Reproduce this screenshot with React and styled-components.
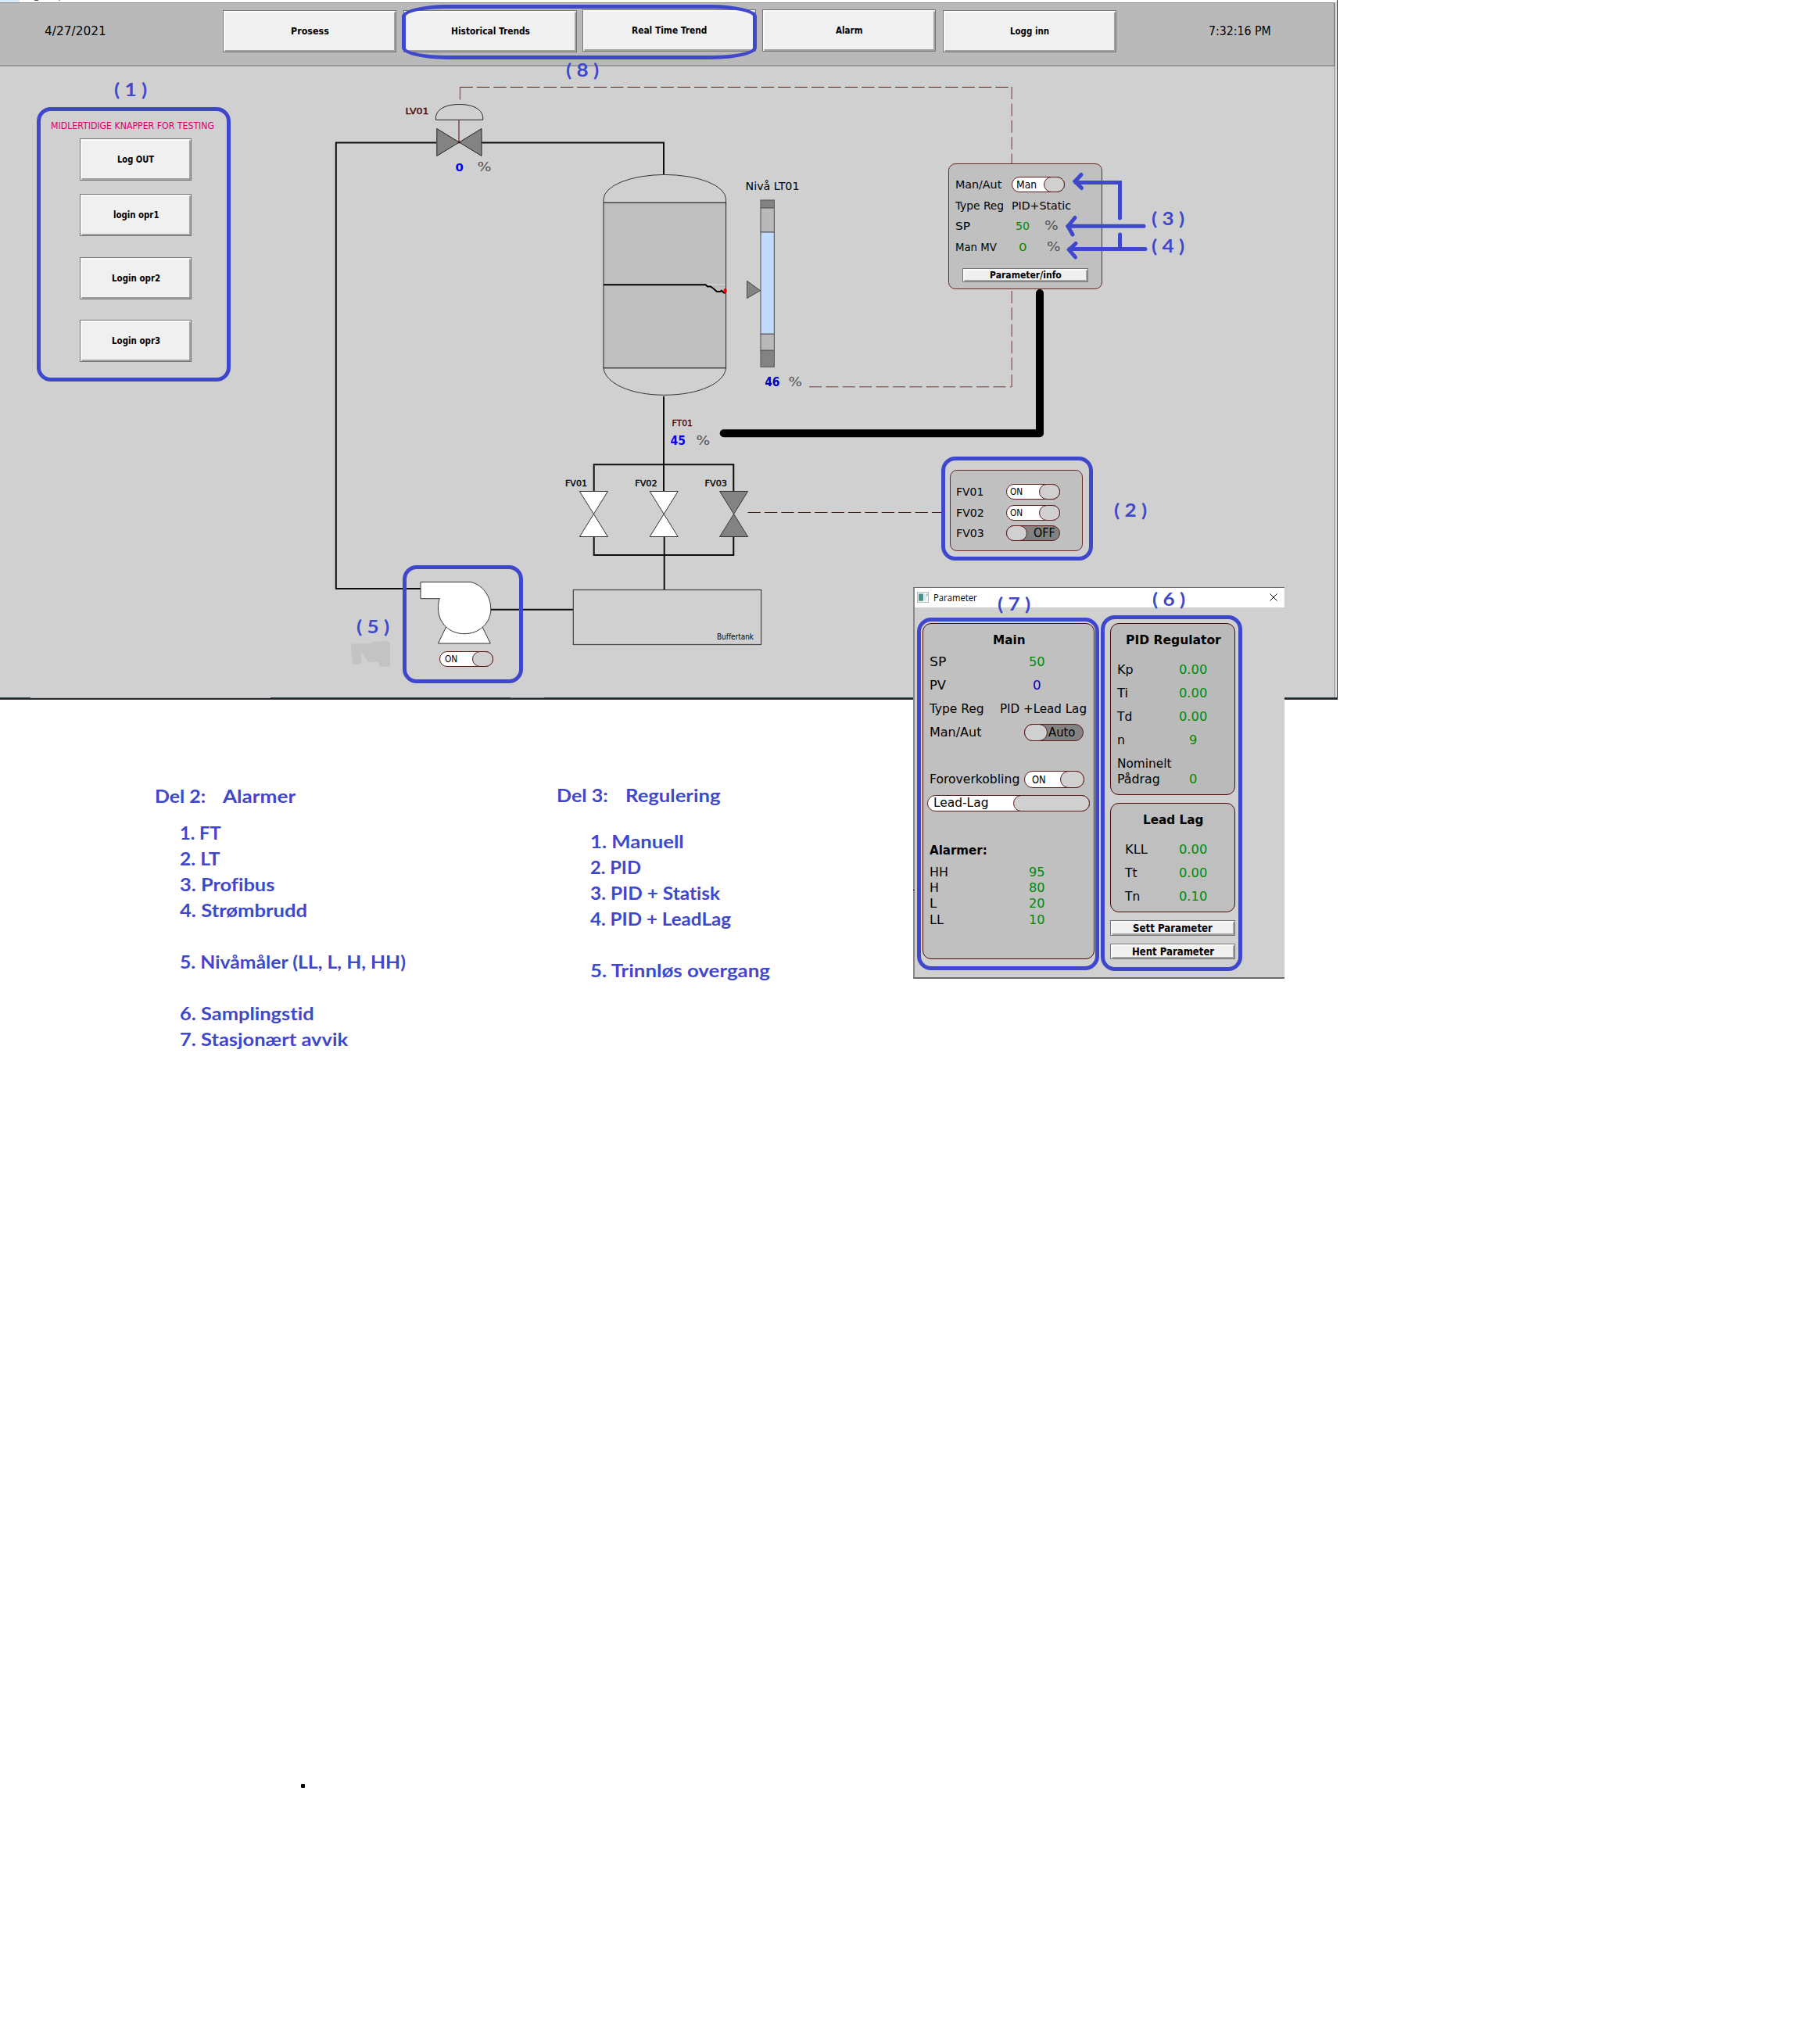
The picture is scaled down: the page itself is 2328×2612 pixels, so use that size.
import React, { useLayoutEffect, useRef, useState } from "react";
import styled, { createGlobalStyle } from "styled-components";

const INK = "#3f48cc";
const MAROON = "#4a0808";
const GREEN = "#008a00";
const UI_FONT = `"DejaVu Sans Condensed", "DejaVu Sans", sans-serif`;

const GlobalStyle = createGlobalStyle`
  * { box-sizing: border-box; }
  body { margin: 0; background: #fff; }
`;

const Page = styled.main`
  position: relative;
  width: 2328px;
  height: 2612px;
  overflow: hidden;
  background: #fff;
  font-family: ${UI_FONT};
  font-variant-ligatures: none;
  color: #000;
`;

/* ---------- text fitted to a fixed width ---------- */

const FitBox = styled.span`
  display: block;
  flex: none;
  width: ${(p) => p.$w}px;
  font-size: ${(p) => p.$size}px;
  font-weight: ${(p) => (p.$bold ? 700 : 400)};
  color: ${(p) => p.$color || "inherit"};
  white-space: pre;
`;

const FitText = styled.span`
  display: inline-block;
  margin-left: -0.5px;
  transform-origin: 0 50%;
`;

function Fit({ w, size = 15, bold, color, children }) {
  const ref = useRef(null);
  const [k, setK] = useState(1);
  useLayoutEffect(() => {
    setK((w + 1.5) / ref.current.offsetWidth);
  }, [w, children]);
  return (
    <FitBox $w={w} $size={size} $bold={bold} $color={color}>
      <FitText ref={ref} style={{ transform: `scaleX(${k})` }}>
        {children}
      </FitText>
    </FitBox>
  );
}

/* ---------- controls ---------- */

const Button = styled.button`
  display: flex;
  flex: none;
  align-items: center;
  justify-content: center;
  width: ${(p) => p.$w}px;
  height: ${(p) => p.$h}px;
  margin: ${(p) => p.$m || 0};
  padding: 0;
  border: 1px solid #757575;
  border-radius: 0;
  background: #f0f0f0;
  box-shadow: inset 1.5px 1.5px 0 #fff, inset -2px -2px 0 #a2a2a2;
  font-family: ${UI_FONT};
  color: #000;
`;

const Track = styled.span`
  display: flex;
  flex: none;
  flex-direction: ${(p) => (p.$on ? "row" : "row-reverse")};
  width: ${(p) => p.$w}px;
  height: ${(p) => p.$h}px;
  border: 1px solid #5c1a1a;
  border-radius: ${(p) => p.$h / 2}px;
  background: ${(p) => (p.$on ? "#fff" : "#828282")};
  color: #000;
`;

const TrackText = styled.span`
  display: flex;
  flex: 1;
  align-items: center;
  padding-left: ${(p) => p.$pad}px;
  line-height: 16px;
`;

const Knob = styled.span`
  flex: none;
  width: ${(p) => p.$w}px;
  margin: -1px;
  border: 1px solid #5c1a1a;
  border-radius: ${(p) => p.$h / 2}px;
  background: #d0d0d0;
`;

function Toggle({ on, w, h = 20, knob = 27, pad, text, textW, size = 13 }) {
  return (
    <Track $on={on} $w={w} $h={h}>
      <TrackText $pad={pad}>
        <Fit w={textW} size={size}>{text}</Fit>
      </TrackText>
      <Knob $w={knob} $h={h} />
    </Track>
  );
}

/* ---------- process screen ---------- */

const Screen = styled.section`
  position: relative;
  width: 1711px;
  height: 895px;
  border-right: 1px solid #222;
  border-bottom: 2px solid #23272b;
  background: #d0d0d0;
`;

const TopStrip = styled.div`
  display: flex;
  height: 3px;
  background: #fff;
`;

const StripTab = styled.span`
  width: 25px;
  background: #d9ecfb;
`;

const StripMark = styled.span`
  width: ${(p) => p.$w}px;
  height: 1px;
  margin-left: ${(p) => p.$gap}px;
  background: ${(p) => p.$color};
`;

const Header = styled.header`
  display: flex;
  align-items: flex-start;
  width: 1707px;
  height: 82px;
  padding: 8px 0 0 57px;
  border: solid #8a8a8a;
  border-width: 1px 1px 2px 0;
  border-bottom-color: #989898;
  background: #b9b9b9;
`;

const HeaderText = styled.div`
  width: ${(p) => p.$w}px;
  line-height: 56px;
`;

const Nav = styled.nav`
  display: flex;
  width: 1261px;
`;

const EdgeLine = styled.div`
  position: absolute;
  top: 4px;
  right: 0;
  width: 3px;
  height: 889px;
  border-left: 1px solid #808080;
  background: #e6e6e6;
`;

const FootLine = styled.div`
  position: absolute;
  left: 0;
  bottom: 0;
  display: flex;
  width: 1710px;
  height: 1px;
  background: #3a4c52;
`;

const FootGap = styled.span`
  width: ${(p) => p.$w}px;
  margin-left: ${(p) => p.$gap}px;
  background: ${(p) => p.$color};
`;

const Diagram = styled.svg`
  position: absolute;
  left: 0;
  top: 0;
  pointer-events: none;
`;

const DiagramText = styled.text`
  font-family: ${UI_FONT};
  font-size: ${(p) => p.$size}px;
  font-weight: ${(p) => (p.$bold ? 700 : 400)};
  stroke: currentColor;
  stroke-width: ${(p) => (p.$heavy ? 0.35 : 0)};
`;

function T({ x, y, w, size = 14, bold, heavy, fill = "#000", children }) {
  return (
    <DiagramText
      x={x - 0.5}
      y={y + size * 0.365}
      textLength={w + 1}
      lengthAdjust="spacingAndGlyphs"
      fill={fill}
      color={fill}
      $size={size}
      $bold={bold}
      $heavy={heavy}
    >
      {children}
    </DiagramText>
  );
}

const Node = styled.div`
  position: absolute;
  left: ${(p) => p.$x}px;
  top: ${(p) => p.$y}px;
`;

const TestButtons = styled(Node)`
  display: flex;
  flex-direction: column;
  align-items: center;
  width: 217px;
`;

const TestTitle = styled.div`
  height: 22px;
  margin-right: 9px;
  line-height: 13px;
`;

const Panel = styled.div`
  width: ${(p) => p.$w}px;
  height: ${(p) => p.$h}px;
  padding: ${(p) => p.$pad};
  border: 1px solid ${(p) => p.$line || "#6b2a2a"};
  border-radius: ${(p) => p.$r || 9}px;
  background: ${(p) => p.$bg || "#c0c0c0"};
`;

const Row = styled.div`
  display: flex;
  align-items: center;
  height: ${(p) => p.$h}px;
  line-height: 20px;
  padding-left: ${(p) => p.$indent || 0}px;
`;

const WideRow = styled(Row)`
  margin-left: -3.5px;
`;

const Label = styled.span`
  flex: none;
  width: ${(p) => p.$w}px;
`;

const Value = styled.span`
  display: flex;
  flex: none;
  justify-content: center;
  width: ${(p) => p.$w}px;
  margin-right: ${(p) => p.$gap || 0}px;
`;

const Title = styled.div`
  display: flex;
  justify-content: center;
  height: ${(p) => p.$h}px;
  padding-right: 8px;
  line-height: ${(p) => p.$lh}px;
`;

/* ---------- parameter window ---------- */

const Window = styled.section`
  position: absolute;
  left: 1168px;
  top: 751px;
  width: 475px;
  height: 501px;
  border: solid #6a6a6a;
  border-width: 1px 0 2px 2px;
  border-left-color: #888;
  background: #d0d0d0;
`;

const EdgeTick = styled.span`
  position: absolute;
  left: -2px;
  top: 386px;
  width: 2px;
  height: 1px;
  background: ${MAROON};
`;

const TitleBar = styled.div`
  display: flex;
  align-items: center;
  height: 25px;
  padding: 0 9px 1px 3px;
  background: #fff;
  font-family: "Open Sans", "Noto Sans", sans-serif;
  line-height: 19px;
`;

const TitleText = styled.div`
  flex: 1;
  padding-left: 6px;
`;

const WindowBody = styled.div`
  display: flex;
  gap: 20px;
  padding: 20px 0 0 10px;
`;

const SideColumn = styled.div`
  display: flex;
  flex-direction: column;
  gap: 10px;
`;

const Spacer = styled.div`
  height: ${(p) => p.$h}px;
`;

/* ---------- pen annotations ---------- */

const PenBox = styled.div`
  position: absolute;
  left: ${(p) => p.$x}px;
  top: ${(p) => p.$y}px;
  width: ${(p) => p.$w}px;
  height: ${(p) => p.$h}px;
  border: 5px solid ${INK};
  border-radius: ${(p) => p.$r || "18px"};
`;

const PenLabel = styled.div`
  position: absolute;
  left: ${(p) => p.$x - 0.7}px;
  top: ${(p) => p.$y - 15}px;
  font-family: Lato, "Open Sans", sans-serif;
  line-height: 28px;
  color: ${INK};
`;

const Notes = styled.section`
  display: flex;
  align-items: flex-start;
  padding: 107px 0 0 198px;
  font-family: Lato, "Open Sans", sans-serif;
  line-height: 33px;
  color: ${INK};
`;

const NoteBlock = styled.div`
  width: ${(p) => p.$w}px;
  margin-top: ${(p) => p.$top || 0}px;
`;

const NoteHead = styled.div`
  display: flex;
  gap: 24px;
  height: 33px;
`;

const NoteList = styled.ul`
  margin: ${(p) => p.$top}px 0 0 ${(p) => p.$left}px;
  padding: 0;
  list-style: none;
`;

const NoteItem = styled.li`
  height: 33px;
  margin-top: ${(p) => (p.$gap ? 33 : 0)}px;
`;

const InkDot = styled.div`
  position: absolute;
  left: 385px;
  top: 2282px;
  width: 5px;
  height: 5px;
  border-radius: 1px;
  background: #000;
`;

const navItems = [
  ["Prosess", 47, "1px 9px 0 0"],
  ["Historical Trends", 99, "1px 7px 0 0"],
  ["Real Time Trend", 95, "0 8px 0 0"],
  ["Alarm", 33, "0 9px 0 0"],
  ["Logg inn", 49, "1px 0 0 0"],
];

const testItems = [
  ["Log OUT", 45.5, "0"],
  ["login opr1", 57, "17px 0 0"],
  ["Login opr2", 60.5, "27px 0 0"],
  ["Login opr3", 60.5, "26px 0 0"],
];

const penLabels = [
  ["1", 147, 115],
  ["8", 725, 90],
  ["3", 1474, 280],
  ["4", 1474, 315],
  ["2", 1426, 653],
  ["5", 457, 802],
  ["7", 1277, 773],
  ["6", 1475, 767],
];

const alarmNotes = [
  ["1. FT", 51],
  ["2. LT", 50],
  ["3. Profibus", 120],
  ["4. Strømbrudd", 161],
  ["5. Nivåmåler (LL, L, H, HH)", 288, true],
  ["6. Samplingstid", 170, true],
  ["7. Stasjonært avvik", 213.5],
];

const controlNotes = [
  ["1. Manuell", 118],
  ["2. PID", 63.5],
  ["3. PID + Statisk", 164],
  ["4. PID + LeadLag", 178],
  ["5. Trinnløs overgang", 228, true],
];

const alarmLimits = [
  ["HH", 22.3, "95"],
  ["H", 11, "80"],
  ["L", 8, "20"],
  ["LL", 17, "10"],
];

const Valve = ({ x, fill }) => (
  <path
    d={`M${x - 18} 628.5H${x + 18}L${x - 18} 686.5H${x + 18}Z`}
    fill={fill}
    stroke="#333"
    strokeWidth="1"
  />
);

function ProcessDiagram() {
  return (
    <Diagram width="1711" height="895" viewBox="0 0 1711 895">
      <g fill="none" stroke="#0c0c0c" strokeWidth="2">
        <path d="M558 182.5H429.8V753H538" />
        <path d="M616 182.5H849V224" />
        <path d="M849 507V629" />
        <path d="M759.7 629V594.3H938.3V629" />
        <path d="M759.7 687V710H938.3V687" />
        <path d="M849.7 687V754" />
        <path d="M627.5 779.7H733" />
      </g>
      <g fill="none" stroke="#8f6a6a" strokeWidth="1.5">
        <path d="M588.5 127.5V111.5" />
        <path d="M1294.2 111V209" strokeDasharray="16 5.4" />
        <path d="M1294.2 372V495" strokeDasharray="16 5.4" />
        <path d="M1035 494.7H1294" strokeDasharray="16 5.4" />
        <path d="M587 154V182" strokeWidth="2" />
      </g>
      <path d="M588.5 111.5H1294" fill="none" stroke="#5a1818" strokeWidth="1.2" strokeDasharray="16.4 5" />
      <path d="M956.5 655.5H1204" fill="none" stroke="#4a1010" strokeDasharray="16.4 5" />

      <path d="M557.5 153.3V149.5C559 139 571 133.5 587.5 133.5S616 139 617.7 149.5V153.3Z" fill="#d0d0d0" stroke="#222" />
      <path d="M558.8 164.5L616 199.5V164.5L558.8 199.5Z" fill="#838383" stroke="#222" />
      <circle cx="587.2" cy="182" r="1.6" fill={MAROON} />

      <path d="M772 259.3V255A78.3 31.6 0 0 1 928.6 255V259.3Z" fill="#d0d0d0" stroke="#333" />
      <path d="M772 470.7C774 490 806 505.3 850 505.3S927 490 928.5 470.7Z" fill="#d0d0d0" stroke="#333" />
      <rect x="772" y="259.3" width="156.6" height="211.4" fill="#bfbfbf" stroke="#222" />
      <path d="M904 363.5H928" stroke="#dadada" />
      <path d="M772 364.3H902.5L905 366.5H909L913 369.5L917 373H921L923 371.8L926 374.5H928" fill="none" stroke="#000" strokeWidth="2" />
      <ellipse cx="927.6" cy="372" rx="2" ry="3" fill="#e80000" />

      <g stroke="#606060" strokeWidth="1.2">
        <rect x="973" y="256" width="17.4" height="10" fill="#838383" />
        <rect x="973" y="266" width="17.4" height="31" fill="#b9b9b9" />
        <rect x="973" y="297" width="17.4" height="130.3" fill="#bfdcff" />
        <rect x="973" y="427.3" width="17.4" height="21" fill="#b9b9b9" />
        <rect x="973" y="448.3" width="17.4" height="21" fill="#838383" />
      </g>
      <path d="M955.5 359.3L972.5 371.7L955.5 381.5Z" fill="#838383" stroke="#444" />

      <Valve x={759.4} fill="#fff" />
      <Valve x={849.2} fill="#fff" />
      <Valve x={938.6} fill="#838383" />

      <rect x="733.3" y="754.5" width="240.3" height="70" fill="#d0d0d0" stroke="#444" strokeWidth="1.2" />

      <path d="M571 801L560.5 823H627.3L616.5 801Z" fill="#fff" stroke="#333" />
      <path
        d="M538 744.5H602C617 748 627.8 762 627.8 779C627.8 797 613 810.7 594 810.7S560.5 797 560.5 778C560.5 773 561 769 562.3 765.7H538Z"
        fill="#fff"
        stroke="#333"
      />
      <path d="M449 823.5H471L478 821L495 820L499 822V852.7H485V847L471 846.5L462 834V849L451 850L449 829Z" fill="#c3c3c3" />

      <path d="M925.7 554.3H1330V375" fill="none" stroke="#000" strokeWidth="10" strokeLinecap="round" strokeLinejoin="round" />

      <T x={519} y={142} w={29} size={10.5} heavy fill={MAROON}>LV01</T>
      <T x={583} y={213.7} w={9.3} size={14.5} bold fill="#0000ff">0</T>
      <T x={611} y={213.7} w={17} size={15} fill="#505050">%</T>
      <T x={954} y={238} w={68} size={14.5}>Nivå LT01</T>
      <T x={978.7} y={488.3} w={18.3} size={15} bold fill="#0000c0">46</T>
      <T x={1009} y={488.3} w={16.5} size={15} fill="#505050">%</T>
      <T x={860} y={541.3} w={25.5} size={11} heavy fill={MAROON}>FT01</T>
      <T x={858} y={563.8} w={18.3} size={15} bold fill="#0000ff">45</T>
      <T x={891} y={563.8} w={16.7} size={15} fill="#505050">%</T>
      <T x={723.5} y={618} w={27} size={11} heavy>FV01</T>
      <T x={812.7} y={618} w={27.5} size={11} heavy>FV02</T>
      <T x={902} y={618} w={27.5} size={11} heavy>FV03</T>
      <T x={917.5} y={813.7} w={46} size={10.5}>Buffertank</T>
    </Diagram>
  );
}

function RegulatorPanel() {
  return (
    <Node $x={1213} $y={209}>
      <Panel $w={197} $h={161} $pad="12.5px 0 0 8px">
        <Row $h={26.7}>
          <Label $w={72}><Fit w={57.5} size={14.5}>Man/Aut</Fit></Label>
          <Toggle on w={68} pad={5} text="Man" textW={25} size={14} />
        </Row>
        <Row $h={26.7}>
          <Label $w={72.5}><Fit w={61} size={14.5}>Type Reg</Fit></Label>
          <Fit w={74.5} size={14.5}>PID+Static</Fit>
        </Row>
        <Row $h={26.7}>
          <Label $w={72}><Fit w={17.5} size={14.5}>SP</Fit></Label>
          <Value $w={28} $gap={14}><Fit w={17} size={14.5} color={GREEN}>50</Fit></Value>
          <Fit w={16.5} size={15} color="#505050">%</Fit>
        </Row>
        <Row $h={26.7}>
          <Label $w={72}><Fit w={51.5} size={14.5}>Man MV</Fit></Label>
          <Value $w={28} $gap={17}><Fit w={8.7} size={14.5} color={GREEN}>0</Fit></Value>
          <Fit w={16.3} size={15} color="#505050">%</Fit>
        </Row>
        <Button $w={161} $h={18} $m="14px 0 0 9px">
          <Fit w={90} size={12} bold>Parameter/info</Fit>
        </Button>
      </Panel>
    </Node>
  );
}

function FeedValvePanel() {
  return (
    <Node $x={1215} $y={601}>
      <Panel $w={170} $h={104} $pad="13.5px 0 0 7.5px">
        <Row $h={26.8}>
          <Label $w={63}><Fit w={34} size={14}>FV01</Fit></Label>
          <Toggle on w={69} pad={5} text="ON" textW={14.5} size={12.5} />
        </Row>
        <Row $h={26.8}>
          <Label $w={63}><Fit w={34.5} size={14}>FV02</Fit></Label>
          <Toggle on w={69} pad={5} text="ON" textW={14.5} size={12.5} />
        </Row>
        <Row $h={26.8}>
          <Label $w={63}><Fit w={34.5} size={14}>FV03</Fit></Label>
          <Toggle w={69} pad={10} text="OFF" textW={26} size={15} />
        </Row>
      </Panel>
    </Node>
  );
}

function ParamRow({ label, labelW, value, valueW, indent = 0, h = 30, color = GREEN }) {
  return (
    <Row $h={h}>
      <Label $w={69}>
        <Row $h={h} $indent={indent}><Fit w={labelW} size={15.5}>{label}</Fit></Row>
      </Label>
      <Value $w={55}>{value && <Fit w={valueW} size={15.5} color={color}>{value}</Fit>}</Value>
    </Row>
  );
}

function ParameterWindow() {
  return (
    <Window>
      <EdgeTick />
      <TitleBar>
        <svg width="15" height="14" viewBox="0 0 15 14">
          <rect x=".5" y=".5" width="14" height="13" fill="#f4f6f7" stroke="#b4bcc2" />
          <rect x="2" y="2.5" width="6" height="9" fill="#4b8f93" />
          <path d="M2 8L8 11.5H2Z" fill="#3aa06b" />
          <rect x="9" y="2.5" width="3" height="9" fill="#e3e6e8" />
          <rect x="12" y="2.5" width="1.6" height="3" fill="#8cc9a0" />
        </svg>
        <TitleText><Fit w={54} size={12}>Parameter</Fit></TitleText>
        <svg width="10" height="10" viewBox="0 0 10 10">
          <path d="M.5 .5L9.5 9.5M9.5 .5L.5 9.5" stroke="#111" fill="none" />
        </svg>
      </TitleBar>
      <WindowBody>
        <Panel $w={220} $h={430} $r={11} $line={MAROON} $pad="10px 0 0 8.5px">
          <Title $h={24} $lh={22}><Fit w={40} size={15.5} bold>Main</Fit></Title>
          <Row $h={30}>
            <Label $w={120}><Fit w={19.5} size={15.5}>SP</Fit></Label>
            <Value $w={33}><Fit w={19.5} size={15.5} color={GREEN}>50</Fit></Value>
          </Row>
          <Row $h={30}>
            <Label $w={120}><Fit w={19.5} size={15.5}>PV</Fit></Label>
            <Value $w={33}><Fit w={9.3} size={15.5} color="#0000c8">0</Fit></Value>
          </Row>
          <Row $h={30}>
            <Label $w={90}><Fit w={68.5} size={15.5}>Type Reg</Fit></Label>
            <Fit w={109} size={15.5}>PID +Lead Lag</Fit>
          </Row>
          <Row $h={30}>
            <Label $w={120.5}><Fit w={65} size={15.5}>Man/Aut</Fit></Label>
            <Toggle w={76} h={22} knob={30} pad={2} text="Auto" textW={32.5} size={15.5} />
          </Row>
          <Spacer $h={30} />
          <Row $h={30}>
            <Label $w={120.5}><Fit w={114} size={15.5}>Foroverkobling</Fit></Label>
            <Toggle on w={77} h={22} knob={31} pad={9} text="ON" textW={16.5} size={13.5} />
          </Row>
          <WideRow $h={30}>
            <Toggle on w={208} h={21} knob={98} pad={7} text="Lead-Lag" textW={69.3} size={15.5} />
          </WideRow>
          <Spacer $h={33} />
          <Row $h={26}><Fit w={72.7} size={16} bold>Alarmer:</Fit></Row>
          <Spacer $h={5} />
          {alarmLimits.map(([name, w, value]) => (
            <Row key={name} $h={20.2}>
              <Label $w={120}><Fit w={w} size={15.5}>{name}</Fit></Label>
              <Value $w={33}><Fit w={19.3} size={15.5} color={GREEN}>{value}</Fit></Value>
            </Row>
          ))}
        </Panel>
        <SideColumn>
          <Panel $w={160} $h={220} $r={11} $line={MAROON} $bg="#bababa" $pad="10px 0 0 8.5px">
            <Title $h={34} $lh={22}><Fit w={120} size={15.5} bold>PID Regulator</Fit></Title>
            <ParamRow label="Kp" labelW={19} value="0.00" valueW={34.7} />
            <ParamRow label="Ti" labelW={12.7} value="0.00" valueW={34.7} />
            <ParamRow label="Td" labelW={17.3} value="0.00" valueW={34.7} />
            <ParamRow label="n" labelW={8.7} value="9" valueW={9} />
            <ParamRow label="Nominelt" labelW={67.7} />
            <ParamRow h={10} label="Pådrag" labelW={53} value="0" valueW={9} />
          </Panel>
          <Panel $w={160} $h={140} $r={11} $line={MAROON} $bg="#bfbfbf" $pad="10px 0 0 8.5px">
            <Title $h={34} $lh={22}><Fit w={76} size={15.5} bold>Lead Lag</Fit></Title>
            <ParamRow indent={10} label="KLL" labelW={27.7} value="0.00" valueW={34.7} />
            <ParamRow indent={10} label="Tt" labelW={14} value="0.00" valueW={34.7} />
            <ParamRow indent={10} label="Tn" labelW={17.3} value="0.10" valueW={34.7} />
          </Panel>
          <Button $w={160} $h={20}><Fit w={100.7} size={13.5} bold>Sett Parameter</Fit></Button>
          <Button $w={160} $h={20}><Fit w={103.7} size={13.5} bold>Hent Parameter</Fit></Button>
        </SideColumn>
      </WindowBody>
    </Window>
  );
}

export default function App() {
  return (
    <Page>
      <GlobalStyle />
      <Screen>
        <TopStrip>
          <StripTab />
          <StripMark $gap={19} $w={5} $color="#5a5a5a" />
          <StripMark $gap={26} $w={2} $color="#b48bb8" />
        </TopStrip>
        <Header>
          <HeaderText $w={228}><Fit w={77} size={15}>4/27/2021</Fit></HeaderText>
          <Nav>
            {navItems.map(([text, w, m]) => (
              <Button key={text} $w={222} $h={54} $m={m}>
                <Fit w={w} size={12} bold>{text}</Fit>
              </Button>
            ))}
          </Nav>
          <HeaderText $w={100}><Fit w={78} size={15}>7:32:16 PM</Fit></HeaderText>
        </Header>
        <EdgeLine />
        <FootLine>
          <FootGap $gap={39} $w={307} $color="#b9b9b9" />
          <FootGap $gap={307} $w={43} $color="#7c8688" />
        </FootLine>

        <ProcessDiagram />

        <TestButtons $x={65} $y={155}>
          <TestTitle>
            <Fit w={208} size={12} color="#d4006f">MIDLERTIDIGE KNAPPER FOR TESTING</Fit>
          </TestTitle>
          {testItems.map(([text, w, m]) => (
            <Button key={text} $w={143} $h={54} $m={m}>
              <Fit w={w} size={12} bold>{text}</Fit>
            </Button>
          ))}
        </TestButtons>

        <Node $x={562} $y={833}>
          <Toggle on w={69} knob={27} pad={6} text="ON" textW={14.5} size={12.5} />
        </Node>
        <RegulatorPanel />
        <FeedValvePanel />
      </Screen>

      <Notes>
        <NoteBlock $w={514}>
          <NoteHead>
            <Fit w={63.5} size={23} bold>Del 2:</Fit>
            <Fit w={91.6} size={23} bold>Alarmer</Fit>
          </NoteHead>
          <NoteList $top={13.5} $left={32.5}>
            {alarmNotes.map(([text, w, gap]) => (
              <NoteItem key={text} $gap={gap}><Fit w={w} size={23} bold>{text}</Fit></NoteItem>
            ))}
          </NoteList>
        </NoteBlock>
        <NoteBlock $w={300} $top={-1}>
          <NoteHead>
            <Fit w={64} size={23} bold>Del 3:</Fit>
            <Fit w={120} size={23} bold>Regulering</Fit>
          </NoteHead>
          <NoteList $top={26} $left={43.5}>
            {controlNotes.map(([text, w, gap]) => (
              <NoteItem key={text} $gap={gap}><Fit w={w} size={23} bold>{text}</Fit></NoteItem>
            ))}
          </NoteList>
        </NoteBlock>
      </Notes>

      <ParameterWindow />

      <PenBox $x={514} $y={6} $w={454} $h={70} $r="58px / 15px" />
      <PenBox $x={47} $y={137} $w={248} $h={351} />
      <PenBox $x={515} $y={723} $w={154} $h={151} />
      <PenBox $x={1204} $y={584} $w={194} $h={133} />
      <PenBox $x={1173} $y={790} $w={233} $h={451} />
      <PenBox $x={1408} $y={787} $w={181} $h={455} />
      {penLabels.map(([n, x, y]) => (
        <PenLabel key={n} $x={x} $y={y}><Fit w={40.5} size={23} bold>{`( ${n} )`}</Fit></PenLabel>
      ))}
      <Diagram width="1711" height="895" viewBox="0 0 1711 895">
        <g fill="none" stroke={INK} strokeWidth="5" strokeLinecap="round">
          <path d="M1376 233.5H1432.5V279" />
          <path d="M1383 223.5L1375 232L1383.5 240.5" />
          <path d="M1366 289.3H1463" />
          <path d="M1375 278.5L1366 289.5L1372 300" />
          <path d="M1432.5 300V318M1368 318.5H1465" />
          <path d="M1376 311.5L1367.5 319.5L1375.5 329" />
        </g>
      </Diagram>
      <InkDot />
    </Page>
  );
}
